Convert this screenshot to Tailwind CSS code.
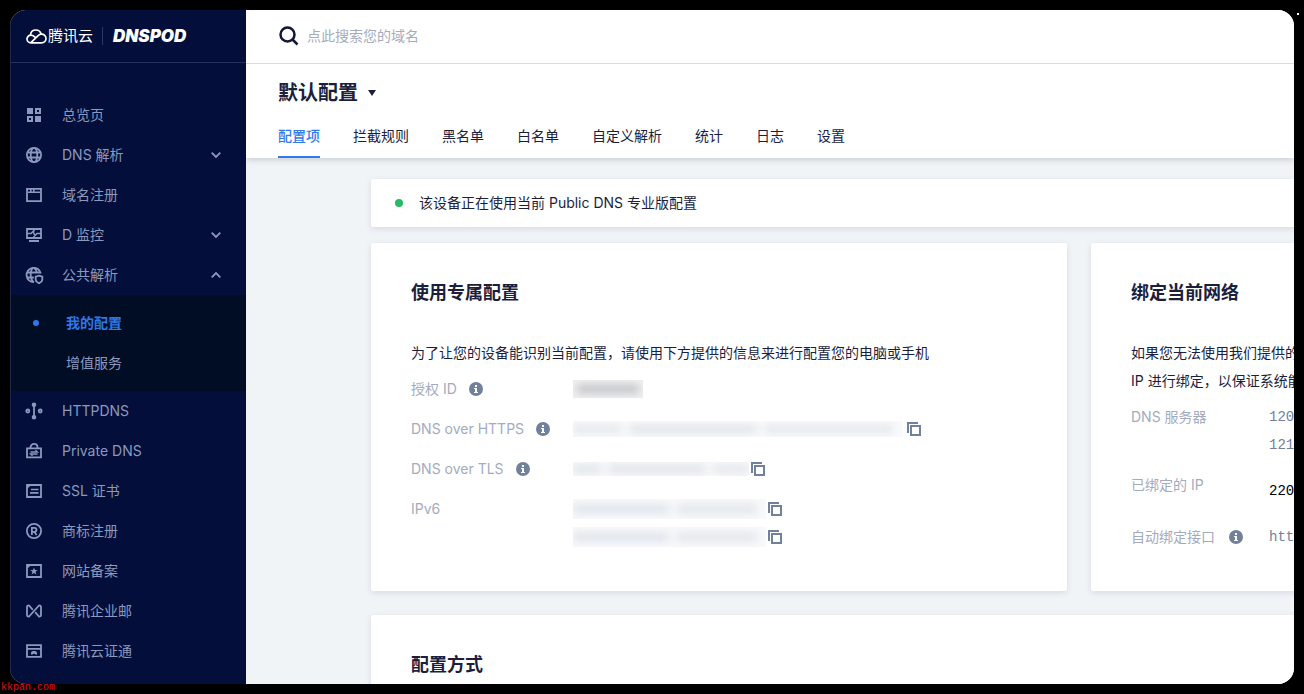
<!DOCTYPE html>
<html lang="zh-CN">
<head>
<meta charset="utf-8">
<meta name="viewport" content="width=device-width, initial-scale=1">
<title>默认配置 - DNSPod</title>
<script src="https://cdn.jsdelivr.net/npm/@tailwindcss/browser@4"></script>
</head>
<body class="relative h-screen overflow-hidden bg-black p-2.5 font-['Inter','Noto_Sans_CJK_SC',sans-serif] text-sm text-[#1b1e3c]">

<svg class="hidden" aria-hidden="true">
  <symbol id="copy" viewBox="0 0 14 14"><path d="M1 11V1h10M4 4h9v9H4z" fill="none" stroke="currentColor" stroke-width="2"/></symbol>
  <symbol id="info" viewBox="0 0 14 14"><circle cx="7" cy="7" r="7" fill="currentColor"/><path d="M6 3h2v2H6zM5 6h3v4h1v1H5v-1h1V7H5z" fill="#fff"/></symbol>
  <symbol id="down" viewBox="0 0 10 6"><path d="M.7.7 5 5 9.300.7" fill="none" stroke="currentColor" stroke-width="1.800"/></symbol>
</svg>

<div class="flex h-full overflow-hidden rounded-2xl bg-[#f1f4f7]">
  <aside class="w-[236px] shrink-0 overflow-hidden border-l border-[#20284a] bg-[#030f3a] text-[#8c98bd]">
    <div class="flex h-[53px] items-center border-b border-[#252f5a] pl-[15px] text-white">
      <svg class="h-[15px] w-[21px]" viewBox="0 0 21 15" fill="none" stroke="currentColor" stroke-width="1.700" stroke-linecap="round" stroke-linejoin="round"><path d="M4.500 6.200C4.700 3 7 1 9.900 1c2.600 0 4.500 1.500 5.200 4"/><path d="M9.500 8.600C8 7 6.600 6.200 4.900 6.200 2.700 6.200 1 7.900 1 10s1.700 3.800 3.900 3.800h10.600c2.500 0 4.500-1.900 4.500-4.300s-2-4.300-4.400-4.300c-1.500 0-2.600.6-3.700 1.700l-7 6.700"/></svg>
      <span class="ml-px text-[15px]">腾讯云</span>
      <span class="ml-[9px] h-[18px] w-px bg-[#2d3761]"></span>
      <span class="ml-2.5 text-[17px] font-black italic">DNSPOD</span>
    </div>
    <nav class="pt-8">
      <a href="#" class="flex h-10 items-center gap-5 pl-[15px]"><svg class="size-4" viewBox="0 0 16 16" fill="currentColor"><path d="M1 1h6v6H1zM9 9h6v6H9z"/><path d="M10 2h4v4h-4zM2 10h4v4H2z" fill="none" stroke="currentColor" stroke-width="2"/></svg>总览页</a>
      <a href="#" class="flex h-10 items-center gap-5 pr-[25px] pl-[15px]"><svg class="size-4" viewBox="0 0 16 16" fill="none" stroke="currentColor" stroke-width="1.800"><circle cx="8" cy="8" r="7.100"/><ellipse cx="8" cy="8" rx="3.300" ry="7.100"/><path d="M1.500 5.500h13M1.500 10.500h13"/></svg>DNS 解析<svg class="ml-auto h-1.5 w-2.5"><use href="#down"/></svg></a>
      <a href="#" class="flex h-10 items-center gap-5 pl-[15px]"><svg class="size-4" viewBox="0 0 16 16" fill="none" stroke="currentColor" stroke-width="1.800"><path d="M1 1.900h14v12.200H1z"/><path d="M2 5.200h12" stroke-width="1.600"/><path d="M4.800 2v3M7.800 2v3" stroke-width="1.500"/></svg>域名注册</a>
      <a href="#" class="flex h-10 items-center gap-5 pr-[25px] pl-[15px]"><svg class="size-4" viewBox="0 0 16 16" fill="none" stroke="currentColor" stroke-width="1.800"><path d="M1 2h14v9H1zM3 14h10"/><path d="M1 6.500h4L7 4.500 9 8.500l2-2h4M8 2v2.500M8 9v2" stroke-width="1.600"/></svg>D 监控<svg class="ml-auto h-1.5 w-2.5"><use href="#down"/></svg></a>
      <a href="#" class="flex h-10 items-center gap-5 pr-[25px] pl-[15px]"><svg class="size-4 overflow-visible" viewBox="0 0 16 16" fill="none" stroke="currentColor" stroke-width="1.800"><path d="M8 15.200A7.200 7.200 0 1 1 14.800 6.500M8 15.200C4 13 3.500 4 7 .800M8 .800c2 1.500 2.800 3.200 2.800 5.500M0.800 5.500h13M.8 10.500h7"/><path d="m13 8.700 3.300 1v3c0 2-1.800 2.700-3.300 3.500-1.500-.8-3.300-1.500-3.300-3.500v-3z"/></svg>公共解析<svg class="ml-auto h-1.5 w-2.5 rotate-180"><use href="#down"/></svg></a>
      <div class="bg-[#000d24] py-2">
        <a href="#" aria-current="page" class="flex h-10 items-center gap-[27px] pl-[22px] font-semibold text-[#2f78ea]"><span class="size-1.5 rounded-full bg-[#2f78ea]"></span>我的配置</a>
        <a href="#" class="flex h-10 items-center pl-[55px]">增值服务</a>
      </div>
      <a href="#" class="flex h-10 items-center gap-5 pl-[15px]"><svg class="size-4 overflow-visible" viewBox="0 0 16 16" fill="none" stroke="currentColor" stroke-width="1.800"><path d="M8 3v10"/><circle cx="8" cy="1.700" r="1.400" fill="currentColor"/><circle cx="8" cy="14.300" r="1.400" fill="currentColor"/><circle cx="1.800" cy="8" r="1.500"/><circle cx="14.200" cy="8" r="1.500"/></svg>HTTPDNS</a>
      <a href="#" class="flex h-10 items-center gap-5 pl-[15px]"><svg class="size-4" viewBox="0 0 16 16" fill="none" stroke="currentColor" stroke-width="1.800"><path d="M1 5.300h14v9H1zM4.300 5.300C4.300-.500 11.700-.500 11.700 5.300"/><path d="M4.500 9h7L9.500 7.200M11.500 11h-7l2 1.800" stroke-width="1.300"/></svg>Private DNS</a>
      <a href="#" class="flex h-10 items-center gap-5 pl-[15px]"><svg class="size-4" viewBox="0 0 16 16" fill="none" stroke="currentColor" stroke-width="1.800"><path d="M1 2h14v12H1z"/><path d="M5 6.500h7.500M4 9.800h8.500M1 4.500 4 2" stroke-width="1.700"/></svg>SSL 证书</a>
      <a href="#" class="flex h-10 items-center gap-5 pl-[15px]"><svg class="size-4" viewBox="0 0 16 16" fill="none" stroke="currentColor" stroke-width="1.800"><circle cx="8" cy="8" r="7.100"/><path d="M5.900 12V4.900h2.600a1.900 1.900 0 0 1 0 3.900H6M8.300 8.800l2.300 3.200"/></svg>商标注册</a>
      <a href="#" class="flex h-10 items-center gap-5 pl-[15px]"><svg class="size-4" viewBox="0 0 16 16"><path d="M1 2h14v12H1zM1 4.500 4 2" fill="none" stroke="currentColor" stroke-width="1.800"/><path fill="currentColor" d="m8 4.500 1 2.500h2.700L9.600 8.700l.8 2.800L8 9.900l-2.400 1.600.8-2.800L4.300 7H7z"/></svg>网站备案</a>
      <a href="#" class="flex h-10 items-center gap-5 pl-[15px]"><svg class="size-4" viewBox="0 0 16 16" fill="none" stroke="currentColor" stroke-width="1.800" stroke-linejoin="round"><path d="M6.800 6.800 3.500 3C2.500 2 1 2.300 1 4v8c0 1.700 1.500 2 2.500 1L12.500 3c1-1 2.500-.7 2.500 1v8c0 1.700-1.500 2-2.500 1L9.200 9.200"/></svg>腾讯企业邮</a>
      <a href="#" class="flex h-10 items-center gap-5 pl-[15px]"><svg class="size-4" viewBox="0 0 16 16"><path d="M1 2.200h14v11.600H1zM1 5.800h14" fill="none" stroke="currentColor" stroke-width="1.800"/><path fill="currentColor" d="M5 11.500V10c0-1.500 1.500-2 3-2s3 .5 3 2v1.500H9.500L8 10.500 6.500 11.500z"/></svg>腾讯云证通</a>
    </nav>
  </aside>

  <main class="min-w-0 flex-1 overflow-hidden">
    <header class="relative bg-white shadow-[0_2px_6px_rgba(20,40,70,0.18)]">
      <label class="flex h-[54px] items-center gap-2 border-b border-[#d8dbe0] pb-0.5 pl-[33px]">
        <svg class="size-5" viewBox="0 0 20 20" fill="none" stroke="#14173a" stroke-width="2.500" aria-hidden="true"><circle cx="8.500" cy="8.500" r="7"/><path d="m13.500 13.500 5 5"/></svg>
        <input type="text" aria-label="搜索域名" placeholder="点此搜索您的域名" class="h-8 flex-1 bg-transparent outline-none placeholder:text-[#a5acbd]">
      </label>
      <div class="pl-8">
        <h1 class="flex h-[57px] items-center text-xl font-semibold"><button type="button" class="flex items-center gap-2.5">默认配置<svg class="h-1.5 w-2" viewBox="0 0 8 6" fill="currentColor"><path d="M0 0h8L4 6z"/></svg></button></h1>
        <nav class="flex h-[37px] gap-[33px]">
          <a href="#" aria-current="page" class="border-b-2 border-[#2f7be8] pt-[5px] font-medium text-[#2f7be8]">配置项</a>
          <a href="#" class="pt-[5px]">拦截规则</a>
          <a href="#" class="pt-[5px]">黑名单</a>
          <a href="#" class="pt-[5px]">白名单</a>
          <a href="#" class="pt-[5px]">自定义解析</a>
          <a href="#" class="pt-[5px]">统计</a>
          <a href="#" class="pt-[5px]">日志</a>
          <a href="#" class="pt-[5px]">设置</a>
        </nav>
      </div>
    </header>

    <div class="pt-[21px] pl-[125px] whitespace-nowrap">
      <div class="flex h-12 w-[1200px] items-center gap-4 rounded-xs bg-white pl-6 shadow-[0_2px_6px_rgba(30,40,70,0.12)]">
        <span class="size-2 rounded-full bg-[#26bb63]"></span>该设备正在使用当前 Public DNS 专业版配置
      </div>

      <div class="mt-4 flex w-[1200px] gap-6">
        <section class="w-[696px] shrink-0 rounded-xs bg-white px-10 pt-9 pb-10 leading-7 shadow-[0_2px_6px_rgba(30,40,70,0.12)]">
          <h2 class="mb-8 text-lg leading-7 font-semibold">使用专属配置</h2>
          <p class="mb-2">为了让您的设备能识别当前配置，请使用下方提供的信息来进行配置您的电脑或手机</p>
          <dl class="grid grid-cols-[162px_1fr] gap-y-3">
            <dt class="flex items-center gap-3 text-[#a3abc0]">授权 ID<svg class="size-3.5 text-[#71819c]"><use href="#info"/></svg></dt>
            <dd class="flex items-center">
              <span class="flex h-[18px] w-[70px] items-center overflow-hidden bg-[#f0f0f1] px-1"><span class="h-2 w-full bg-[#bfc0c4] blur-xs"></span></span>
            </dd>
            <dt class="flex items-center gap-3 text-[#a3abc0]">DNS over HTTPS<svg class="size-3.5 text-[#71819c]"><use href="#info"/></svg></dt>
            <dd class="flex items-center">
              <span class="flex h-4 w-[330px] items-center gap-2 overflow-hidden bg-[#f9fafb]"><span class="h-2 w-12 bg-[#e3e6ec] blur-xs"></span><span class="h-2 w-32 bg-[#e0e3e9] blur-xs"></span><span class="h-2 w-32 bg-[#e3e6ec] blur-xs"></span></span>
              <button type="button" aria-label="复制 DNS over HTTPS" class="ml-1 text-[#71819c]"><svg class="size-3.5"><use href="#copy"/></svg></button>
            </dd>
            <dt class="flex items-center gap-3 text-[#a3abc0]">DNS over TLS<svg class="size-3.5 text-[#71819c]"><use href="#info"/></svg></dt>
            <dd class="flex items-center">
              <span class="flex h-3.5 w-44 items-center gap-2 overflow-hidden bg-[#f8f9fa]"><span class="h-2 w-7 bg-[#dfe3e9] blur-xs"></span><span class="h-2 w-24 bg-[#dfe2e8] blur-xs"></span><span class="h-2 w-9 bg-[#e3e6ec] blur-xs"></span></span>
              <button type="button" aria-label="复制 DNS over TLS" class="ml-0.5 text-[#71819c]"><svg class="size-3.5"><use href="#copy"/></svg></button>
            </dd>
            <dt class="text-[#a3abc0]">IPv6</dt>
            <dd>
              <div class="flex h-7 items-center">
                <span class="flex h-5 w-[193px] items-center gap-2 overflow-hidden bg-[#f8f9fa]"><span class="h-2 w-24 bg-[#dce2ea] blur-xs"></span><span class="h-2 w-20 bg-[#e0e4ea] blur-xs"></span></span>
                <button type="button" aria-label="复制 IPv6 地址一" class="ml-0.5 text-[#71819c]"><svg class="size-3.5"><use href="#copy"/></svg></button>
              </div>
              <div class="flex h-7 items-center">
                <span class="flex h-5 w-[193px] items-center gap-2 overflow-hidden bg-[#f8f9fa]"><span class="h-2 w-24 bg-[#dce2ea] blur-xs"></span><span class="h-2 w-20 bg-[#e0e4ea] blur-xs"></span></span>
                <button type="button" aria-label="复制 IPv6 地址二" class="ml-0.5 text-[#71819c]"><svg class="size-3.5"><use href="#copy"/></svg></button>
              </div>
            </dd>
          </dl>
        </section>

        <section class="flex-1 rounded-xs bg-white px-10 pt-9 pb-10 leading-7 shadow-[0_2px_6px_rgba(30,40,70,0.12)]">
          <h2 class="mb-8 text-lg leading-7 font-semibold">绑定当前网络</h2>
          <p class="mb-2">如果您无法使用我们提供的<br>IP 进行绑定，以保证系统能</p>
          <dl class="grid grid-cols-[138px_1fr] gap-y-3">
            <dt class="text-[#a3abc0]">DNS 服务器</dt>
            <dd class="font-['Liberation_Mono',monospace] text-[#71819c]">120<br>121</dd>
            <dt class="text-[#a3abc0]">已绑定的 IP</dt>
            <dd class="h-10 font-['Liberation_Mono',monospace] leading-10 text-black">220</dd>
            <dt class="flex items-center gap-3.5 text-[#a3abc0]">自动绑定接口<svg class="size-3.5 text-[#71819c]"><use href="#info"/></svg></dt>
            <dd class="font-['Liberation_Mono',monospace] text-[#71819c]">htt</dd>
          </dl>
        </section>
      </div>

      <section class="mt-6 w-[1200px] rounded-xs bg-white px-10 py-9 shadow-[0_2px_6px_rgba(30,40,70,0.12)]">
        <h2 class="text-lg leading-7 font-semibold">配置方式</h2>
      </section>
    </div>
  </main>
</div>

<span class="absolute top-[13px] right-[5px] size-0.5 bg-white"></span>
<span class="absolute bottom-0 left-px font-['Liberation_Mono',monospace] text-[10px] leading-3 text-[#e01010]">kkpan.com</span>
</body>
</html>
